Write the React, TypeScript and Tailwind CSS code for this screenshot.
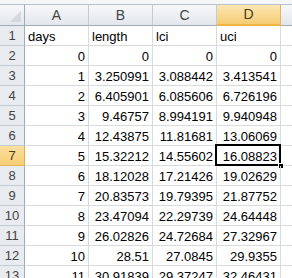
import React from "react";

const cols = ["A", "B", "C", "D"];

const rows: string[][] = [
  ["days", "length", "lci", "uci"],
  ["0", "0", "0", "0"],
  ["1", "3.250991", "3.088442", "3.413541"],
  ["2", "6.405901", "6.085606", "6.726196"],
  ["3", "9.46757", "8.994191", "9.940948"],
  ["4", "12.43875", "11.81681", "13.06069"],
  ["5", "15.32212", "14.55602", "16.08823"],
  ["6", "18.12028", "17.21426", "19.02629"],
  ["7", "20.83573", "19.79395", "21.87752"],
  ["8", "23.47094", "22.29739", "24.64448"],
  ["9", "26.02826", "24.72684", "27.32967"],
  ["10", "28.51", "27.0845", "29.9355"],
  ["11", "30.91839", "29.37247", "32.46431"],
];

const SEL_ROW = 7;
const SEL_COL = 3; // D

export default function App() {
  return (
    <div
      className="w-[292px] h-[278px] overflow-hidden bg-white text-black"
      style={{ fontFamily: '"Liberation Sans", Arial, sans-serif' }}
    >
      {/* formula bar edge */}
      <div className="h-[5px] bg-[#f4f6f8] border-b border-[#b9c1ca]" />

      <div className="grid grid-cols-[25px_64px_64px_64px_64px_11px] w-[292px]">
        {/* corner */}
        <div className="relative h-[21px] bg-linear-to-b from-[#f7f8fa] to-[#e3e7ec] border-r border-b border-[#9eabb8]">
          <div className="absolute right-[3px] bottom-[3px] w-0 h-0 border-l-[11px] border-l-transparent border-b-[11px] border-b-[#d3d8de]" />
        </div>
        {cols.map((c, i) =>
          i === SEL_COL ? (
            <div
              key={c}
              className="h-[21px] flex items-center justify-center text-[14px] text-[#4a3a1a] bg-linear-to-b from-[#fce6b3] to-[#f6cc72] border-r border-[#e0b862] border-b-2 border-b-[#f0b542]"
            >
              {c}
            </div>
          ) : (
            <div
              key={c}
              className="h-[21px] flex items-center justify-center text-[14px] text-[#444] bg-linear-to-b from-[#f7f8fa] to-[#e3e7ec] border-r border-[#c5cbd2] border-b border-b-[#9eabb8]"
            >
              {c}
            </div>
          )
        )}
        {/* column E, cut off at the window edge */}
        <div className="h-[21px] bg-linear-to-b from-[#f7f8fa] to-[#e3e7ec] border-b border-b-[#9eabb8]" />

        {rows.map((r, ri) => {
          const n = ri + 1;
          const selRow = n === SEL_ROW;
          return (
            <React.Fragment key={n}>
              <div
                className={
                  selRow
                    ? "h-[20px] flex items-center justify-center text-[13px] text-[#4a3a1a] bg-linear-to-b from-[#fbe0a0] to-[#f6cd74] border-r border-r-[#e8a93c] border-b border-b-[#e0b862]"
                    : "h-[20px] flex items-center justify-center text-[13px] text-[#444] bg-[#e8ebef] border-r border-r-[#9eabb8] border-b border-b-[#c5cbd2]"
                }
              >
                {n}
              </div>
              {[0, 1, 2, 3].map((ci) => {
                const v = r[ci];
                const isText = ri === 0;
                const sel = selRow && ci === SEL_COL;
                return (
                  <div
                    key={ci}
                    className={
                      "relative h-[20px] flex items-center pt-[2px] px-[3px] text-[13px] border-r border-b border-[#d8dbde] " +
                      (isText ? "justify-start" : "justify-end")
                    }
                  >
                    {v}
                    {sel && (
                      <>
                        <div className="absolute -left-[2px] -top-[2px] -right-[1px] -bottom-[1px] border-2 border-black" />
                        <div className="absolute -right-[4px] -bottom-[4px] w-[6px] h-[6px] bg-black border border-white" />
                      </>
                    )}
                  </div>
                );
              })}
              <div className="h-[20px] border-b border-[#d8dbde]" />
            </React.Fragment>
          );
        })}
      </div>
    </div>
  );
}
